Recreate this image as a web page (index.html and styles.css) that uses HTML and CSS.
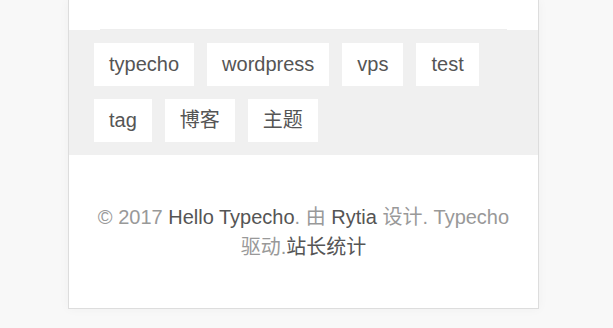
FILE: index.html
```html
<!DOCTYPE html>
<html lang="zh-CN">
<head>
	<title>Hello Typecho</title>
	<meta charset="UTF-8">
	<meta name="viewport" content="width=device-width, initial-scale=1">
	<link rel="stylesheet" href="styles.css">
</head>
<body>
	<div id="container">
		<div class="post-end"></div>
		<div class="tags">
			<a class="tag" href="#">typecho</a>
			<a class="tag" href="#">wordpress</a>
			<a class="tag" href="#">vps</a>
			<a class="tag" href="#">test</a>
			<a class="tag" href="#">tag</a>
			<a class="tag" href="#">博客</a>
			<a class="tag" href="#">主题</a>
		</div>
		<div class="footer">
			&copy; 2017 <a href="#">Hello Typecho</a>. 由 <a href="#">Rytia</a> 设计. Typecho 驱动.<a href="#">站长统计</a>
		</div>
	</div>
</body>
</html>
```

FILE: styles.css
```css
html, body {
	margin: 0;
	height: 100%;
}
body {
	background: #f8f8f8;
	font-family: "Liberation Sans", Arial, "Noto Sans CJK SC", sans-serif;
	color: #999;
}
a {
	color: #555;
	text-decoration: none;
}
#container {
	width: 471px;
	margin: 0 0 0 68px;
	padding-top: 29px;
	background: #fff;
	border: 1px solid #ddd;
	border-top: none;
	box-sizing: border-box;
	box-shadow: 0 0 10px rgba(0, 0, 0, 0.04);
}
.post-end {
	margin: 0 31px;
	border-bottom: 1px solid #eee;
}
.tags {
	display: flex;
	flex-wrap: wrap;
	gap: 13px;
	padding: 13px 25px;
	background: #f0f0f0;
}
.tag {
	display: block;
	height: 43px;
	line-height: 43px;
	padding: 0 15px;
	background: #fff;
	font-size: 20px;
	color: #555;
}
.footer {
	padding: 47px 22px 46px;
	font-size: 20px;
	line-height: 30px;
	text-align: center;
}
```
